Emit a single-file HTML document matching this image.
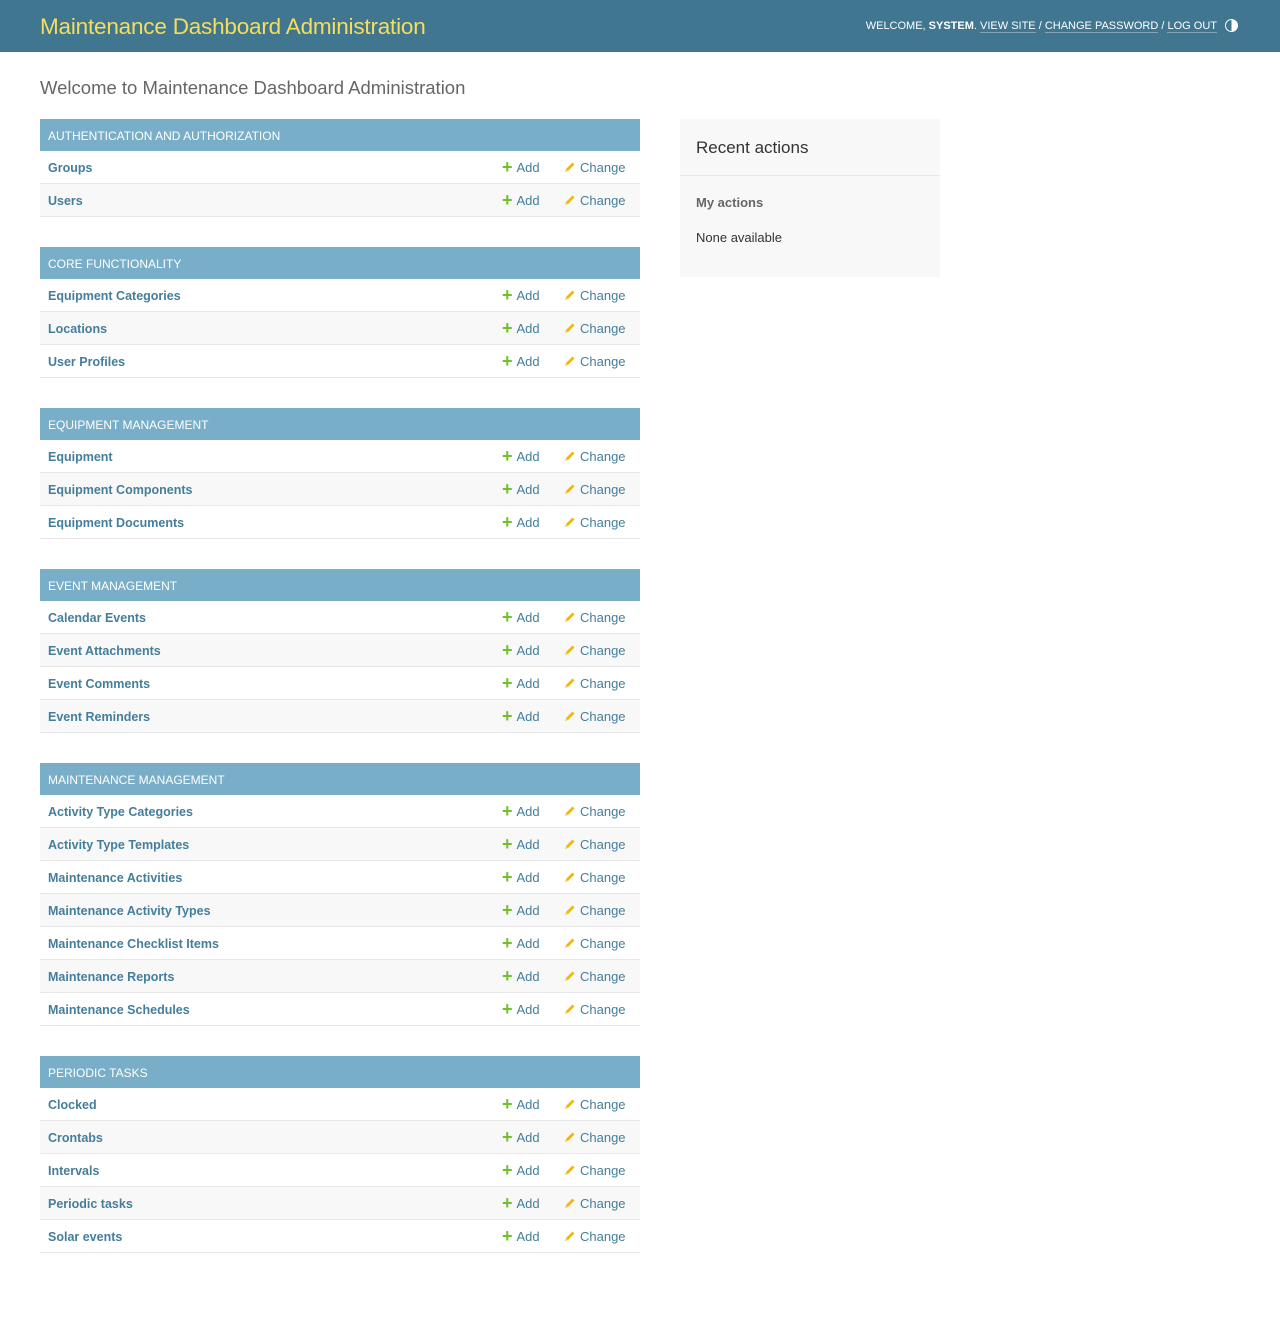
<!DOCTYPE html>
<html><head><meta charset="utf-8"><style>
*{box-sizing:border-box}
body{margin:0;font-family:"Liberation Sans",sans-serif;font-size:13px;color:#333;background:#fff;width:1280px;height:1323px;overflow:hidden}
#header{height:52px;background:#417690;position:relative}
#header h1{margin:0;position:absolute;left:40px;top:14px;font-weight:normal;font-size:22.5px;color:#f5dd5d;letter-spacing:-0.2px}
#tools{position:absolute;right:42px;top:19px;font-size:11px;color:#fff;text-transform:uppercase}
#tools a{color:#fff;text-decoration:none;border-bottom:1px solid rgba(255,255,255,.35)}
#tools .t{display:inline-block;width:13px;height:13px;border:1.5px solid #fff;border-radius:50%;vertical-align:-3px;margin-left:8px;background:linear-gradient(90deg,transparent 50%,#fff 50%)}
h2.w{position:absolute;left:40px;top:77px;margin:0;font-weight:300;font-size:18.5px;color:#666}
#content{position:absolute;left:40px;top:119px;width:600px}
.m{margin-bottom:30px}
.cap{height:32px;background:#79aec8;color:#fff;font-size:12px;line-height:34px;padding-left:8px;text-transform:uppercase}
.r{height:33px;border-bottom:1px solid #e8e8e8;position:relative;line-height:34px}
.r:nth-child(even){background:#f8f8f8}
.r .n{position:absolute;left:8px;color:#447e9b;font-weight:bold;font-size:12.5px}
.r .a{position:absolute;left:462px;color:#447e9b;top:0}
.r .c{position:absolute;left:524px;color:#447e9b;top:0}
.a b{color:#70bf2b;font-size:18px;font-weight:bold;margin-right:4px;line-height:0;vertical-align:-1px}
.c svg{vertical-align:-1px;margin-right:4px}
#side{position:absolute;left:680px;top:119px;width:260px;height:158px;background:#f8f8f8}
#side h2{margin:0;font-weight:normal;font-size:17px;padding:19px 16px 0;height:57px;border-bottom:1px solid #e8e8e8;color:#333}
#side h3{margin:0;position:absolute;left:16px;top:76px;font-size:13px;color:#666}
#side p{margin:0;position:absolute;left:16px;top:111px;font-size:13px}
</style></head><body>
<div id="header"><h1>Maintenance Dashboard Administration</h1>
<div id="tools">Welcome, <b>system</b>. <a>View site</a> / <a>Change password</a> / <a>Log out</a><span class="t"></span></div></div>
<h2 class="w">Welcome to Maintenance Dashboard Administration</h2>
<div id="content">
<div class="m"><div class="cap">Authentication and Authorization</div><div>
<div class="r"><span class="n">Groups</span></div><div class="r"><span class="n">Users</span></div></div></div>
<div class="m"><div class="cap">Core Functionality</div><div>
<div class="r"><span class="n">Equipment Categories</span></div><div class="r"><span class="n">Locations</span></div><div class="r"><span class="n">User Profiles</span></div></div></div>
<div class="m"><div class="cap">Equipment Management</div><div>
<div class="r"><span class="n">Equipment</span></div><div class="r"><span class="n">Equipment Components</span></div><div class="r"><span class="n">Equipment Documents</span></div></div></div>
<div class="m"><div class="cap">Event Management</div><div>
<div class="r"><span class="n">Calendar Events</span></div><div class="r"><span class="n">Event Attachments</span></div><div class="r"><span class="n">Event Comments</span></div><div class="r"><span class="n">Event Reminders</span></div></div></div>
<div class="m"><div class="cap">Maintenance Management</div><div>
<div class="r"><span class="n">Activity Type Categories</span></div><div class="r"><span class="n">Activity Type Templates</span></div><div class="r"><span class="n">Maintenance Activities</span></div><div class="r"><span class="n">Maintenance Activity Types</span></div><div class="r"><span class="n">Maintenance Checklist Items</span></div><div class="r"><span class="n">Maintenance Reports</span></div><div class="r"><span class="n">Maintenance Schedules</span></div></div></div>
<div class="m"><div class="cap">Periodic Tasks</div><div>
<div class="r"><span class="n">Clocked</span></div><div class="r"><span class="n">Crontabs</span></div><div class="r"><span class="n">Intervals</span></div><div class="r"><span class="n">Periodic tasks</span></div><div class="r"><span class="n">Solar events</span></div></div></div>
</div>
<div id="side"><h2>Recent actions</h2><h3>My actions</h3><p>None available</p></div>
<script>
document.querySelectorAll('.r').forEach(function(r){r.insertAdjacentHTML('beforeend','<span class="a"><b>+</b>Add</span><span class="c"><svg width="12" height="12" viewBox="0 0 12 12"><path d="M1 11 L2 8 L8.5 1.5 L10.5 3.5 L4 10 Z" fill="#efb80b"/><path d="M1 11 L2 8 L4 10 Z" fill="#f6d36a"/></svg>Change</span>')});
</script>
</body></html>
